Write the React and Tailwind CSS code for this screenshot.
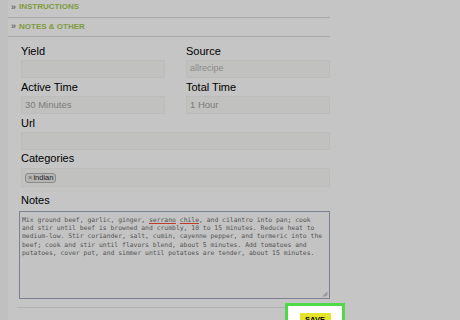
import React from "react";

const Field = ({ label, value, className = "", valueClass = "" }) => (
  <div className={`shrink-0 ${className}`}>
    <div className="h-[14px] text-[11px] leading-[14px] text-black">{label}</div>
    <div className="mt-[2px] h-[18px] border border-[#bcbcba] bg-[#c1c1bf] flex items-center px-[3px]">
      <span className={valueClass}>{value}</span>
    </div>
  </div>
);

const App = () => {
  return (
    <div className="w-[460px] h-[320px] overflow-hidden bg-[#c5c5c5] flex font-['Liberation_Sans',Arial,sans-serif]">
      <div className="w-[8px] h-full shrink-0 bg-[#c0c0c0]" />
      <div className="w-[322px] shrink-0 flex flex-col">
        {/* section headers */}
        <div className="shrink-0 h-[18px] border-b border-[#a9a9a9] flex items-start pt-[2px] pl-[3px] gap-[3px] text-[8px] font-bold text-[#7f9a3c]">
          <span className="text-[#6e6e6e] text-[9px] leading-[10px]">»</span>
          <span className="leading-[10px]">INSTRUCTIONS</span>
        </div>
        <div className="shrink-0 h-[19px] border-b border-[#a9a9a9] flex items-center pl-[3px] gap-[3px] text-[8px] font-bold text-[#7f9a3c]">
          <span className="text-[#6e6e6e] text-[9px]">»</span>
          <span>NOTES &amp; OTHER</span>
        </div>

        {/* form */}
        <div className="shrink-0 pl-[13px] pt-[7px] flex flex-col">
          <div className="flex gap-[21px]">
            <Field label="Yield" value="" className="w-[144px]" />
            <Field label="Source" value="allrecipe" className="flex-1" valueClass="text-[9px] text-[#8c8c8c]" />
          </div>
          <div className="flex gap-[21px] mt-[2px]">
            <Field label="Active Time" value="30 Minutes" className="w-[144px]" valueClass="text-[9.5px] text-[#7c7c7c]" />
            <Field label="Total Time" value="1 Hour" className="flex-1" valueClass="text-[9.5px] text-[#7c7c7c]" />
          </div>
          <Field label="Url" value="" className="mt-[2px]" />
          <div className="shrink-0 mt-[1px]">
            <div className="h-[14px] text-[11px] leading-[14px] text-black">Categories</div>
            <div className="mt-[3px] h-[19px] border border-[#bcbcba] bg-[#c1c1bf] flex items-center px-[3px]">
              <span className="h-[10px] px-[2px] rounded-[3px] border border-[#8a8a8a] bg-[#b6b6b6] text-[7.5px] leading-[8px] text-[#222] flex items-center">
                <span className="text-[#555] mr-[1px]">×</span>indian
              </span>
            </div>
          </div>
          <div className="shrink-0 mt-[6px]">
            <div className="h-[14px] text-[11px] leading-[14px] text-black">Notes</div>
            <div className="relative mt-[4px] -ml-[2px] h-[88px] border border-[#7b8191] bg-[#c3c3c3] px-[2px] pt-[4px] font-['DejaVu_Sans_Mono',monospace] text-[6.4px] leading-[8.2px] text-[#555555] whitespace-pre">
              <div>
                Mix ground beef, garlic, ginger,{" "}
                <span className="underline decoration-[#c0392b] decoration-[0.6px] underline-offset-[1px]">serrano</span>{" "}
                <span className="underline decoration-[#c0392b] decoration-[0.6px] underline-offset-[1px]">chile</span>, and cilantro into pan; cook
              </div>
              <div>and stir until beef is browned and crumbly, 10 to 15 minutes. Reduce heat to</div>
              <div>medium-low. Stir coriander, salt, cumin, cayenne pepper, and turmeric into the</div>
              <div>beef; cook and stir until flavors blend, about 5 minutes. Add tomatoes and</div>
              <div>potatoes, cover pot, and simmer until potatoes are tender, about 15 minutes.</div>
              <svg className="absolute right-[1px] bottom-[1px]" width="6" height="6" viewBox="0 0 6 6">
                <path d="M1 5.5 L5.5 1 M3 5.5 L5.5 3" stroke="#666" strokeWidth="0.8" />
              </svg>
            </div>
          </div>
          <div className="flex items-start mt-[4px]">
            <div className="shrink-0 w-[268px] -ml-[4px] mt-[4px] border-t border-[#b3b3b3]" />
            <div className="shrink-0 w-[60px] h-[30px] border-[3px] border-[#4fd94a] bg-white flex justify-center pt-[7px]">
              <div className="w-[31px] h-[14px] bg-[#e4e42c] flex items-start justify-center pt-[3px] text-[7.5px] font-bold text-black leading-none">
                SAVE
              </div>
            </div>
          </div>
        </div>
      </div>
    </div>
  );
};

export default App;
